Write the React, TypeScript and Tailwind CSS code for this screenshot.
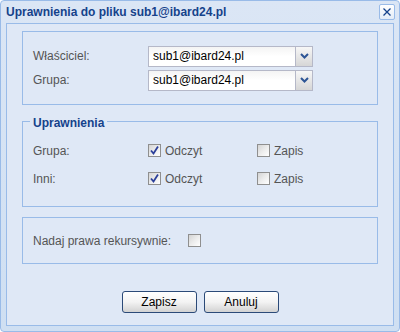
import React from 'react';

const font = { fontFamily: '"Liberation Sans", Arial, sans-serif' };

function Combo({ value }: { value: string }) {
  return (
    <div className="flex h-[21px] w-[165px]">
      <div className="flex flex-1 items-center border border-[#b5b8c8] bg-gradient-to-b from-[#f4f4f4] via-white to-white pl-[4px] text-[12px] text-black">
        {value}
      </div>
      <div className="flex w-[17px] items-center justify-center border border-l-0 border-[#b5b8c8] bg-gradient-to-b from-[#f7f7f7] to-[#d6d6d6]">
        <svg width="9" height="6" viewBox="0 0 9 6">
          <path d="M1 1 L4.5 4.5 L8 1" fill="none" stroke="#2d5595" strokeWidth="2" />
        </svg>
      </div>
    </div>
  );
}

function Check({ checked }: { checked?: boolean }) {
  return (
    <div className="flex h-[13px] w-[13px] items-center justify-center border border-[#8f8f8f] bg-gradient-to-br from-[#d4d4d4] via-[#ececec] to-white">
      {checked && (
        <svg width="11" height="11" viewBox="0 0 11 11">
          <path d="M2 5.5 L4.5 8.5 L9 1.5" fill="none" stroke="#2b3f9a" strokeWidth="1.8" />
        </svg>
      )}
    </div>
  );
}

function Button({ label }: { label: string }) {
  return (
    <button className="flex h-[22px] w-[75px] items-center justify-center rounded-[3px] border border-[#2b4a78] bg-gradient-to-b from-white via-[#f3f3f3] to-[#d2d2d2] text-[12px] text-black">
      {label}
    </button>
  );
}

export default function App() {
  return (
    <div style={font} className="flex h-[332px] w-[400px] flex-col rounded-[4px] border border-[#99bbe8] bg-gradient-to-b from-[#dbe6f5] to-[#cfdff2]">
      <div className="flex h-[22px] items-center justify-between pl-[5px] pr-[4px]">
        <span className="text-[12px] font-bold text-[#15428b]">Uprawnienia do pliku sub1@ibard24.pl</span>
        <div className="flex h-[16px] w-[16px] items-center justify-center rounded-[2px] border border-[#99bbe8] bg-gradient-to-b from-white to-[#e3ecf7]">
          <svg width="10" height="10" viewBox="0 0 10 10">
            <path d="M1.5 1.5 L8.5 8.5 M8.5 1.5 L1.5 8.5" stroke="#15428b" strokeWidth="1.3" />
          </svg>
        </div>
      </div>
      <div className="mx-[5px] mb-[5px] flex flex-1 flex-col border border-[#99bbe8] bg-[#dfe8f6] px-[15px] pt-[7px] text-[12px] text-[#555]">
        <div className="flex h-[74px] flex-col justify-center gap-[3px] border border-[#99bbe8] pl-[10px]">
          <div className="flex items-center">
            <span className="w-[115px]">Właściciel:</span>
            <Combo value="sub1@ibard24.pl" />
          </div>
          <div className="flex items-center">
            <span className="w-[115px]">Grupa:</span>
            <Combo value="sub1@ibard24.pl" />
          </div>
        </div>

        <div className="relative mt-[16px] flex h-[86px] flex-col gap-[15px] border border-[#99bbe8] pl-[10px] pt-[22px]">
          <span className="absolute -top-[8px] left-[7px] bg-[#dfe8f6] px-[3px] font-bold text-[#15428b]">Uprawnienia</span>
          {['Grupa:', 'Inni:'].map((l) => (
            <div key={l} className="flex h-[13px] items-center">
              <span className="w-[115px]">{l}</span>
              <Check checked />
              <span className="ml-[4px] w-[92px]">Odczyt</span>
              <Check />
              <span className="ml-[4px]">Zapis</span>
            </div>
          ))}
        </div>

        <div className="mt-[10px] flex h-[47px] items-center border border-[#99bbe8] pl-[10px]">
          <span className="w-[155px]">Nadaj prawa rekursywnie:</span>
          <Check />
        </div>

        <div className="mt-[27px] flex justify-center gap-[7px]">
          <Button label="Zapisz" />
          <Button label="Anuluj" />
        </div>
      </div>
    </div>
  );
}
